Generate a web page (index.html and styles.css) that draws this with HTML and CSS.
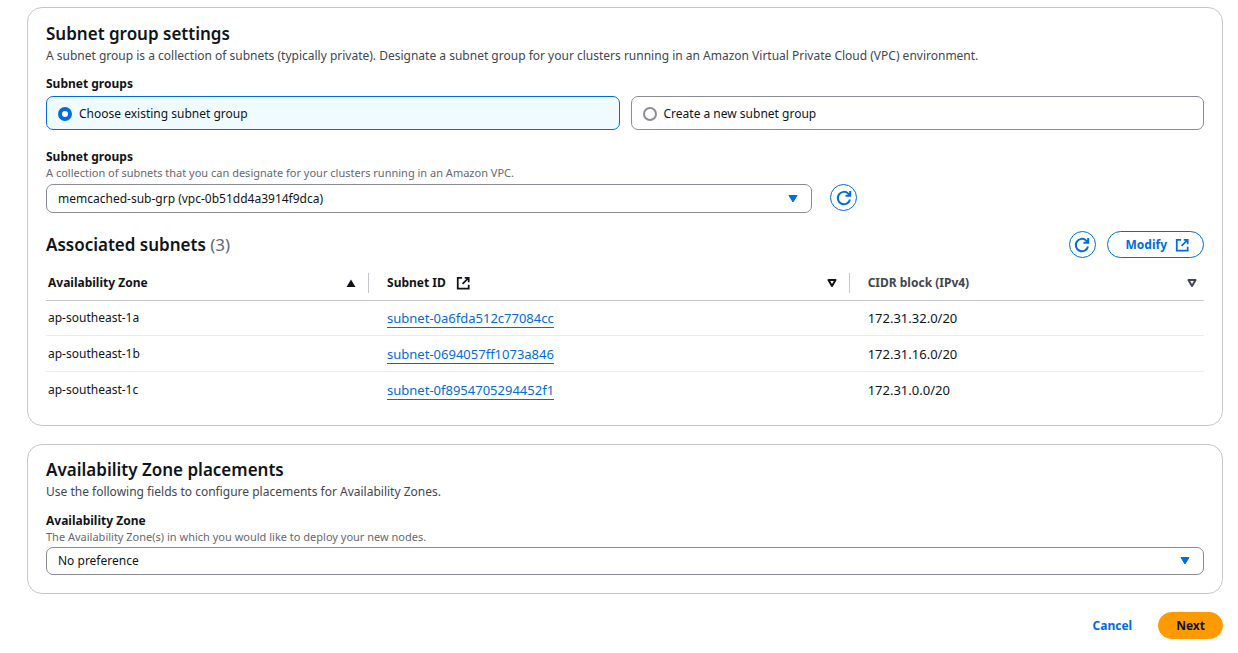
FILE: index.html
```html
<!DOCTYPE html>
<html lang="en">
<head>
<meta charset="utf-8">
<meta name="viewport" content="width=device-width, initial-scale=1">
<title>Subnet group settings</title>
<link rel="stylesheet" href="styles.css">
</head>
<body>
<svg class="defs" aria-hidden="true">
  <symbol id="refresh" viewBox="0 0 16 16"><path d="M14 9.500A6.200 6.200 0 1 1 12.300 3.600L14 5.500M14.200 1v4.700H9.500"/></symbol>
  <symbol id="external" viewBox="0 0 16 16"><path d="M7 2H2v12.500h12.500V10M10 2h4.500v5M14.500 2 7.500 9"/></symbol>
  <symbol id="sort-up" viewBox="0 0 10 8"><path d="M5 .5 9.500 8H.5z" fill="currentColor"/></symbol>
  <symbol id="sort-down" viewBox="0 0 10 8"><path d="M1.500 1h7L5 7z" fill="none" stroke="currentColor" stroke-width="2" stroke-linejoin="round"/></symbol>
  <symbol id="caret" viewBox="0 0 10 8"><path d="M1 .5h8L5 7z" fill="currentColor" stroke="currentColor" stroke-linejoin="round"/></symbol>
</svg>
<form class="page">
  <section class="card card-subnets">
    <h2 class="title">Subnet group settings</h2>
    <p class="description">A subnet group is a collection of subnets (typically private). Designate a subnet group for your clusters running in an Amazon Virtual Private Cloud (VPC) environment.</p>
    <fieldset class="choices">
      <legend class="label">Subnet groups</legend>
      <div class="tiles">
        <label class="tile tile-selected"><input class="radio" type="radio" name="mode" checked>Choose existing subnet group</label>
        <label class="tile"><input class="radio" type="radio" name="mode">Create a new subnet group</label>
      </div>
    </fieldset>
    <div class="group-field">
      <label class="label" for="group">Subnet groups</label>
      <p class="hint">A collection of subnets that you can designate for your clusters running in an Amazon VPC.</p>
      <div class="group-row">
        <div class="select-wrap">
          <select class="select" id="group"><option>memcached-sub-grp (vpc-0b51dd4a3914f9dca)</option></select>
          <svg class="caret" aria-hidden="true"><use href="#caret"/></svg>
        </div>
        <button class="button round" type="button" aria-label="Refresh subnet groups"><svg class="icon"><use href="#refresh"/></svg></button>
      </div>
    </div>
    <div class="table-bar">
      <h2 class="title">Associated subnets <span class="count">(3)</span></h2>
      <div class="actions">
        <button class="button round" type="button" aria-label="Refresh subnets"><svg class="icon"><use href="#refresh"/></svg></button>
        <button class="button modify" type="button">Modify <svg class="icon icon-small" aria-hidden="true"><use href="#external"/></svg></button>
      </div>
    </div>
    <table class="table">
      <colgroup><col class="col-zone"><col class="col-id"><col></colgroup>
      <thead>
        <tr>
          <th scope="col"><div class="head"><span>Availability Zone</span><svg class="sort" aria-hidden="true"><use href="#sort-up"/></svg></div></th>
          <th scope="col"><div class="head"><span class="head-link">Subnet ID <svg class="icon icon-small" aria-hidden="true"><use href="#external"/></svg></span><svg class="sort" aria-hidden="true"><use href="#sort-down"/></svg></div></th>
          <th class="muted" scope="col"><div class="head"><span>CIDR block (IPv4)</span><svg class="sort" aria-hidden="true"><use href="#sort-down"/></svg></div></th>
        </tr>
      </thead>
      <tbody>
        <tr><td>ap-southeast-1a</td><td class="code"><a class="link" href="#">subnet-0a6fda512c77084cc</a></td><td class="code">172.31.32.0/20</td></tr>
        <tr><td>ap-southeast-1b</td><td class="code"><a class="link" href="#">subnet-0694057ff1073a846</a></td><td class="code">172.31.16.0/20</td></tr>
        <tr><td>ap-southeast-1c</td><td class="code"><a class="link" href="#">subnet-0f8954705294452f1</a></td><td class="code">172.31.0.0/20</td></tr>
      </tbody>
    </table>
  </section>
  <section class="card">
    <h2 class="title">Availability Zone placements</h2>
    <p class="description">Use the following fields to configure placements for Availability Zones.</p>
    <div class="zone-field">
      <label class="label" for="zone">Availability Zone</label>
      <p class="hint">The Availability Zone(s) in which you would like to deploy your new nodes.</p>
      <div class="select-wrap">
        <select class="select" id="zone"><option>No preference</option></select>
        <svg class="caret" aria-hidden="true"><use href="#caret"/></svg>
      </div>
    </div>
  </section>
  <div class="footer">
    <button class="button plain" type="button">Cancel</button>
    <button class="button primary" type="submit">Next</button>
  </div>
</form>
</body>
</html>
```
FILE: styles.css
```css
* { box-sizing: border-box; }
body {
  margin: 0;
  background: #fff;
  color: #0f141a;
  font: 12px/18px "Noto Sans", "Open Sans", sans-serif;
}
.defs { display: none; }
.page {
  display: flex;
  flex-direction: column;
  gap: 18px;
  padding: 7px 15px 14px 27px;
}
.card {
  padding: 14px 18px 18px;
  border: 1px solid #c6c6cd;
  border-radius: 15px;
}
.card-subnets { padding-top: 15px; }
.title { margin: 0; font-size: 17px; line-height: 22px; font-weight: 600; }
.count { color: #656871; font-weight: 400; }
.description { margin: 2px 0 0; color: #424650; }
.choices { margin: 10px 0 0; padding: 0; border: 0; min-width: 0; }
.label { display: block; padding: 0; font-weight: 700; }
.tiles { display: grid; grid-template-columns: 1fr 1fr; gap: 11px; padding-top: 3px; }
.tile {
  display: flex;
  align-items: center;
  gap: 7px;
  height: 34px;
  padding: 1px 11px 0;
  border: 1px solid #8c8c94;
  border-radius: 7px;
}
.tile-selected { border-color: #006ce0; background: #f0fbff; }
.radio {
  appearance: none;
  width: 14px;
  height: 14px;
  margin: 0;
  border: 2px solid #8c8c94;
  border-radius: 50%;
  background: #fff;
}
.radio:checked { border: 4px solid #006ce0; }
.group-field { margin-top: 18px; }
.hint { margin: 0; color: #656871; font-size: 11px; line-height: 14px; }
.group-row { display: grid; grid-template-columns: 766fr 374fr; gap: 18px; margin-top: 4px; }
.select-wrap { display: grid; align-items: center; }
.select-wrap > * { grid-area: 1 / 1; }
.select {
  appearance: none;
  width: 100%;
  height: 28px;
  padding: 0 32px 0 11px;
  border: 1px solid #8c8c94;
  border-radius: 7px;
  background: #fff;
  color: inherit;
  font: inherit;
}
.group-row .select { height: 29px; }
.caret {
  width: 10px;
  height: 8px;
  margin-right: 14px;
  justify-self: end;
  color: #006ce0;
  pointer-events: none;
}
.button {
  display: inline-flex;
  align-items: center;
  justify-content: center;
  height: 27px;
  padding: 0 18px;
  border: 1px solid #006ce0;
  border-radius: 14px;
  background: #fff;
  color: #006ce0;
  font: inherit;
  font-weight: 700;
}
.round { width: 27px; padding: 0; }
.icon { width: 16px; height: 16px; fill: none; stroke: currentColor; stroke-width: 2; }
.icon-small { width: 14px; height: 14px; }
.modify { gap: 8px; padding: 0 14px 0 18px; }
.table-bar { display: flex; justify-content: space-between; align-items: center; margin-top: 18px; }
.actions { display: flex; gap: 11px; }
.table { width: 100%; margin-top: 7px; border-collapse: separate; border-spacing: 0; table-layout: fixed; }
.col-zone { width: 27.9%; }
.col-id { width: 41.5%; }
.table th { padding: 8px 0 7px; border-bottom: 1px solid #c6c6cd; font-weight: 700; text-align: left; }
.head {
  display: flex;
  justify-content: space-between;
  align-items: center;
  height: 20px;
  padding: 0 12px 0 18px;
  border-right: 1px solid #c6c6cd;
}
th:last-child .head { padding-right: 7px; border: 0; }
th:first-child .head { padding-left: 2px; }
.head-link { display: flex; align-items: center; gap: 10px; }
.sort { width: 10px; height: 8px; }
.table th.muted { color: #424650; }
.table td { height: 35px; padding: 0 18px; border-bottom: 1px solid #ebebf0; }
.table td:first-child { padding-left: 2px; }
.table tr:nth-child(2) td { height: 36px; }
.table tr:last-child td { border-bottom: 0; }
.table .code { font-size: 13px; }
.link { border-bottom: 1px solid #006ce0; color: #006ce0; line-height: 16px; text-decoration: none; }
.zone-field { margin-top: 11px; }
.zone-field .select-wrap { margin-top: 3px; }
.footer { display: flex; justify-content: flex-end; gap: 7px; }
.plain { border-color: transparent; }
.primary { padding: 0 17px; border-color: #ff9900; background: #ff9900; color: #0f141a; }
```
